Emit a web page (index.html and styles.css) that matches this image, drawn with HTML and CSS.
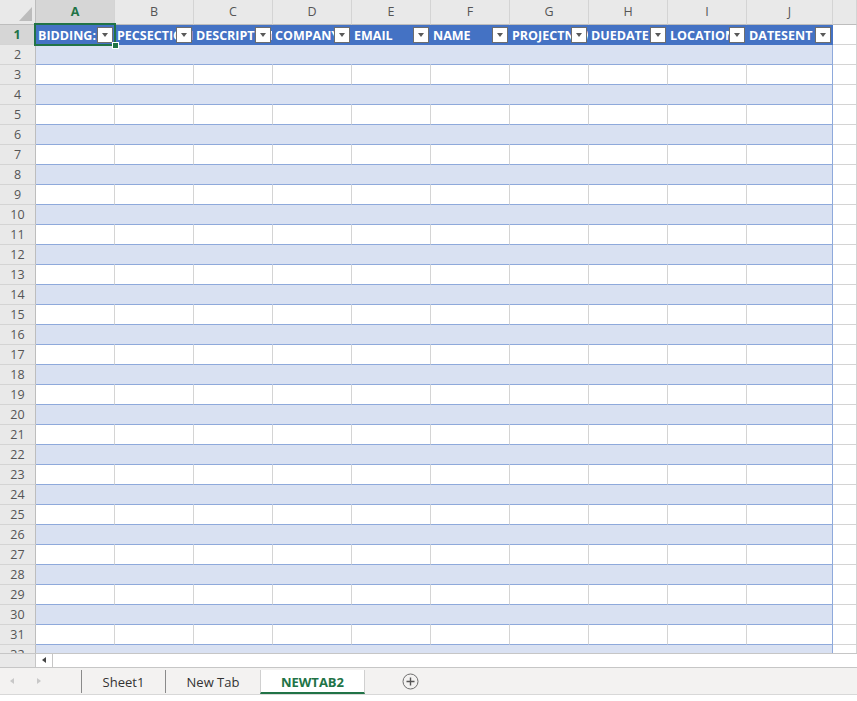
FILE: index.html
```html
<!DOCTYPE html>
<html>
<head>
<meta charset="utf-8">
<link rel="stylesheet" href="styles.css">
</head>
<body>
<div class="app">
  <div class="grid">
    <div class="row colhead">
      <div class="corner"><span class="tri"></span></div>
      <div class="ch sel">A</div><div class="ch">B</div><div class="ch">C</div><div class="ch">D</div><div class="ch">E</div><div class="ch">F</div><div class="ch">G</div><div class="ch">H</div><div class="ch">I</div><div class="ch">J</div><div class="ch k"></div>
    </div>
    <div class="row hdr">
      <div class="rh sel">1</div>
      <div class="c"><span class="t">BIDDING:</span><span class="dd"></span></div>
      <div class="c"><span class="t">PECSECTION</span><span class="dd"></span></div>
      <div class="c"><span class="t">DESCRIPTION</span><span class="dd"></span></div>
      <div class="c"><span class="t">COMPANY</span><span class="dd"></span></div>
      <div class="c"><span class="t">EMAIL</span><span class="dd"></span></div>
      <div class="c"><span class="t">NAME</span><span class="dd"></span></div>
      <div class="c"><span class="t">PROJECTNAME</span><span class="dd"></span></div>
      <div class="c"><span class="t">DUEDATE</span><span class="dd"></span></div>
      <div class="c"><span class="t">LOCATION</span><span class="dd"></span></div>
      <div class="c j"><span class="t">DATESENT</span><span class="dd"></span></div>
      <div class="c k"></div>
    </div>
    <div class="row band"><div class="rh">2</div><div class="c"></div><div class="c"></div><div class="c"></div><div class="c"></div><div class="c"></div><div class="c"></div><div class="c"></div><div class="c"></div><div class="c"></div><div class="c j"></div><div class="c k"></div></div>
    <div class="row"><div class="rh">3</div><div class="c"></div><div class="c"></div><div class="c"></div><div class="c"></div><div class="c"></div><div class="c"></div><div class="c"></div><div class="c"></div><div class="c"></div><div class="c j"></div><div class="c k"></div></div>
    <div class="row band"><div class="rh">4</div><div class="c"></div><div class="c"></div><div class="c"></div><div class="c"></div><div class="c"></div><div class="c"></div><div class="c"></div><div class="c"></div><div class="c"></div><div class="c j"></div><div class="c k"></div></div>
    <div class="row"><div class="rh">5</div><div class="c"></div><div class="c"></div><div class="c"></div><div class="c"></div><div class="c"></div><div class="c"></div><div class="c"></div><div class="c"></div><div class="c"></div><div class="c j"></div><div class="c k"></div></div>
    <div class="row band"><div class="rh">6</div><div class="c"></div><div class="c"></div><div class="c"></div><div class="c"></div><div class="c"></div><div class="c"></div><div class="c"></div><div class="c"></div><div class="c"></div><div class="c j"></div><div class="c k"></div></div>
    <div class="row"><div class="rh">7</div><div class="c"></div><div class="c"></div><div class="c"></div><div class="c"></div><div class="c"></div><div class="c"></div><div class="c"></div><div class="c"></div><div class="c"></div><div class="c j"></div><div class="c k"></div></div>
    <div class="row band"><div class="rh">8</div><div class="c"></div><div class="c"></div><div class="c"></div><div class="c"></div><div class="c"></div><div class="c"></div><div class="c"></div><div class="c"></div><div class="c"></div><div class="c j"></div><div class="c k"></div></div>
    <div class="row"><div class="rh">9</div><div class="c"></div><div class="c"></div><div class="c"></div><div class="c"></div><div class="c"></div><div class="c"></div><div class="c"></div><div class="c"></div><div class="c"></div><div class="c j"></div><div class="c k"></div></div>
    <div class="row band"><div class="rh">10</div><div class="c"></div><div class="c"></div><div class="c"></div><div class="c"></div><div class="c"></div><div class="c"></div><div class="c"></div><div class="c"></div><div class="c"></div><div class="c j"></div><div class="c k"></div></div>
    <div class="row"><div class="rh">11</div><div class="c"></div><div class="c"></div><div class="c"></div><div class="c"></div><div class="c"></div><div class="c"></div><div class="c"></div><div class="c"></div><div class="c"></div><div class="c j"></div><div class="c k"></div></div>
    <div class="row band"><div class="rh">12</div><div class="c"></div><div class="c"></div><div class="c"></div><div class="c"></div><div class="c"></div><div class="c"></div><div class="c"></div><div class="c"></div><div class="c"></div><div class="c j"></div><div class="c k"></div></div>
    <div class="row"><div class="rh">13</div><div class="c"></div><div class="c"></div><div class="c"></div><div class="c"></div><div class="c"></div><div class="c"></div><div class="c"></div><div class="c"></div><div class="c"></div><div class="c j"></div><div class="c k"></div></div>
    <div class="row band"><div class="rh">14</div><div class="c"></div><div class="c"></div><div class="c"></div><div class="c"></div><div class="c"></div><div class="c"></div><div class="c"></div><div class="c"></div><div class="c"></div><div class="c j"></div><div class="c k"></div></div>
    <div class="row"><div class="rh">15</div><div class="c"></div><div class="c"></div><div class="c"></div><div class="c"></div><div class="c"></div><div class="c"></div><div class="c"></div><div class="c"></div><div class="c"></div><div class="c j"></div><div class="c k"></div></div>
    <div class="row band"><div class="rh">16</div><div class="c"></div><div class="c"></div><div class="c"></div><div class="c"></div><div class="c"></div><div class="c"></div><div class="c"></div><div class="c"></div><div class="c"></div><div class="c j"></div><div class="c k"></div></div>
    <div class="row"><div class="rh">17</div><div class="c"></div><div class="c"></div><div class="c"></div><div class="c"></div><div class="c"></div><div class="c"></div><div class="c"></div><div class="c"></div><div class="c"></div><div class="c j"></div><div class="c k"></div></div>
    <div class="row band"><div class="rh">18</div><div class="c"></div><div class="c"></div><div class="c"></div><div class="c"></div><div class="c"></div><div class="c"></div><div class="c"></div><div class="c"></div><div class="c"></div><div class="c j"></div><div class="c k"></div></div>
    <div class="row"><div class="rh">19</div><div class="c"></div><div class="c"></div><div class="c"></div><div class="c"></div><div class="c"></div><div class="c"></div><div class="c"></div><div class="c"></div><div class="c"></div><div class="c j"></div><div class="c k"></div></div>
    <div class="row band"><div class="rh">20</div><div class="c"></div><div class="c"></div><div class="c"></div><div class="c"></div><div class="c"></div><div class="c"></div><div class="c"></div><div class="c"></div><div class="c"></div><div class="c j"></div><div class="c k"></div></div>
    <div class="row"><div class="rh">21</div><div class="c"></div><div class="c"></div><div class="c"></div><div class="c"></div><div class="c"></div><div class="c"></div><div class="c"></div><div class="c"></div><div class="c"></div><div class="c j"></div><div class="c k"></div></div>
    <div class="row band"><div class="rh">22</div><div class="c"></div><div class="c"></div><div class="c"></div><div class="c"></div><div class="c"></div><div class="c"></div><div class="c"></div><div class="c"></div><div class="c"></div><div class="c j"></div><div class="c k"></div></div>
    <div class="row"><div class="rh">23</div><div class="c"></div><div class="c"></div><div class="c"></div><div class="c"></div><div class="c"></div><div class="c"></div><div class="c"></div><div class="c"></div><div class="c"></div><div class="c j"></div><div class="c k"></div></div>
    <div class="row band"><div class="rh">24</div><div class="c"></div><div class="c"></div><div class="c"></div><div class="c"></div><div class="c"></div><div class="c"></div><div class="c"></div><div class="c"></div><div class="c"></div><div class="c j"></div><div class="c k"></div></div>
    <div class="row"><div class="rh">25</div><div class="c"></div><div class="c"></div><div class="c"></div><div class="c"></div><div class="c"></div><div class="c"></div><div class="c"></div><div class="c"></div><div class="c"></div><div class="c j"></div><div class="c k"></div></div>
    <div class="row band"><div class="rh">26</div><div class="c"></div><div class="c"></div><div class="c"></div><div class="c"></div><div class="c"></div><div class="c"></div><div class="c"></div><div class="c"></div><div class="c"></div><div class="c j"></div><div class="c k"></div></div>
    <div class="row"><div class="rh">27</div><div class="c"></div><div class="c"></div><div class="c"></div><div class="c"></div><div class="c"></div><div class="c"></div><div class="c"></div><div class="c"></div><div class="c"></div><div class="c j"></div><div class="c k"></div></div>
    <div class="row band"><div class="rh">28</div><div class="c"></div><div class="c"></div><div class="c"></div><div class="c"></div><div class="c"></div><div class="c"></div><div class="c"></div><div class="c"></div><div class="c"></div><div class="c j"></div><div class="c k"></div></div>
    <div class="row"><div class="rh">29</div><div class="c"></div><div class="c"></div><div class="c"></div><div class="c"></div><div class="c"></div><div class="c"></div><div class="c"></div><div class="c"></div><div class="c"></div><div class="c j"></div><div class="c k"></div></div>
    <div class="row band"><div class="rh">30</div><div class="c"></div><div class="c"></div><div class="c"></div><div class="c"></div><div class="c"></div><div class="c"></div><div class="c"></div><div class="c"></div><div class="c"></div><div class="c j"></div><div class="c k"></div></div>
    <div class="row"><div class="rh">31</div><div class="c"></div><div class="c"></div><div class="c"></div><div class="c"></div><div class="c"></div><div class="c"></div><div class="c"></div><div class="c"></div><div class="c"></div><div class="c j"></div><div class="c k"></div></div>
    <div class="row band"><div class="rh">32</div><div class="c"></div><div class="c"></div><div class="c"></div><div class="c"></div><div class="c"></div><div class="c"></div><div class="c"></div><div class="c"></div><div class="c"></div><div class="c j"></div><div class="c k"></div></div>
    <div class="selbox"><span class="handle"></span></div>
  </div>
  <div class="hscroll">
    <div class="hs-gap"></div>
    <div class="hs-btn"><span class="arr-left"></span></div>
    <div class="hs-track"></div>
  </div>
  <div class="tabs">
    <div class="nav">
      <span class="nav-l"></span>
      <span class="nav-r"></span>
    </div>
    <div class="tab t1">Sheet1</div>
    <div class="tab t2">New Tab</div>
    <div class="tab active">NEWTAB2</div>
    <div class="add">
      <svg width="17" height="17" viewBox="0 0 17 17"><circle cx="8.5" cy="8.5" r="7.5" fill="none" stroke="#6e6e6e" stroke-width="1"/><path d="M8.5 4.5v8M4.5 8.5h8" stroke="#555" stroke-width="1.4"/></svg>
    </div>
  </div>
  <div class="foot"></div>
</div>
</body>
</html>
```

FILE: styles.css
```css
* { box-sizing: border-box; margin: 0; padding: 0; }
html, body { width: 857px; height: 701px; overflow: hidden; background: #fff; }
body { font-family: "Open Sans", "Noto Sans", "Liberation Sans", sans-serif; }

.app { display: flex; flex-direction: column; height: 701px; }

.grid { position: relative; height: 653px; overflow: hidden; flex: none; }

.row {
  display: grid;
  grid-template-columns: 36px repeat(9, 79px) 86px 1fr;
  height: 20px;
}

/* column header */
.colhead { height: 25px; }
.corner {
  position: relative;
  background: #e9e9e9;
  border-right: 1px solid #bdbdbd;
  border-bottom: 1px solid #bdbdbd;
}
.tri {
  position: absolute;
  right: 3px;
  bottom: 3px;
  width: 0; height: 0;
  border-left: 13px solid transparent;
  border-bottom: 14px solid #bcbcbc;
}
.ch {
  background: #e9e9e9;
  border-right: 1px solid #d4d4d4;
  border-bottom: 1px solid #bdbdbd;
  color: #555;
  font-size: 12.5px;
  line-height: 24px;
  text-align: center;
}
.ch.sel {
  background: #d6d6d6;
  color: #217346;
  font-weight: 700;
  border-bottom: 2px solid #217346;
  line-height: 23px;
}

/* row header */
.rh {
  background: #e9e9e9;
  border-right: 1px solid #bdbdbd;
  border-bottom: 1px solid #d4d4d4;
  color: #555;
  font-size: 12.5px;
  line-height: 19px;
  text-align: center;
}
.rh.sel {
  background: #d6d6d6;
  color: #217346;
  font-weight: 700;
  border-right: 2px solid #217346;
}

/* cells */
.c {
  background: #fff;
  border-right: 1px solid #d4d4d4;
  border-bottom: 1px solid #8ea9db;
}
.band .c { background: #d9e1f2; border-right-color: #d9e1f2; }
.c.j { border-right-color: #8ea9db; }
.c.k { background: #fff; border-right-color: #d4d4d4; border-bottom-color: #d4d4d4; }
.band .c.j { border-right-color: #8ea9db; }
.band .c.k { background: #fff; border-right-color: #d4d4d4; }

/* table header row */
.hdr .c {
  position: relative;
  overflow: hidden;
  white-space: nowrap;
  background: #4472c4;
  border-right-color: #4472c4;
  border-bottom-color: #4472c4;
  color: #fff;
  font-weight: 700;
  font-size: 12.5px;
  line-height: 20px;
  padding-left: 2px;
}
.hdr .c.j { border-right-color: #4472c4; }
.hdr .c.k { background: #fff; border-right-color: #d4d4d4; border-bottom-color: #d4d4d4; }
.t { display: block; padding-top: 1px; }
.dd {
  position: absolute;
  right: 1px;
  bottom: 1px;
  width: 16px;
  height: 16px;
  background: #fff;
  border: 1px solid #6e6e6e;
}
.dd::after {
  content: "";
  position: absolute;
  left: 4px;
  top: 5px;
  border-left: 3.5px solid transparent;
  border-right: 3.5px solid transparent;
  border-top: 4px solid #595959;
}

/* active cell selection */
.selbox {
  position: absolute;
  left: 34px;
  top: 23px;
  width: 82px;
  height: 23px;
  border: 2px solid #217346;
}
.handle {
  position: absolute;
  right: -5px;
  bottom: -5px;
  width: 7px;
  height: 7px;
  background: #217346;
  border: 1px solid #fff;
}

/* horizontal scroll strip */
.hscroll {
  display: flex;
  height: 14px;
  flex: none;
  border-top: 1px solid #c6c6c6;
  background: #fff;
}
.hs-gap { width: 36px; background: #e9e9e9; border-right: 1px solid #c6c6c6; }
.hs-btn {
  position: relative;
  width: 17px;
  border-right: 1px solid #c6c6c6;
  background: #fff;
}
.arr-left {
  position: absolute;
  left: 6px;
  top: 3px;
  border-top: 3.5px solid transparent;
  border-bottom: 3.5px solid transparent;
  border-right: 4px solid #444;
}
.hs-track { flex: 1; }

/* sheet tabs */
.tabs {
  display: flex;
  align-items: stretch;
  height: 28px;
  flex: none;
  background: #f3f2f1;
  border-top: 1px solid #c6c6c6;
  border-bottom: 1px solid #d8d8d8;
  font-size: 13px;
  color: #333;
}
.nav {
  position: relative;
  width: 81px;
}
.nav-l, .nav-r {
  position: absolute;
  top: 10px;
  border-top: 3.5px solid transparent;
  border-bottom: 3.5px solid transparent;
}
.nav-l { left: 10px; border-right: 4px solid #c8c8c8; }
.nav-r { left: 37px; border-left: 4px solid #c8c8c8; }
.tab {
  display: flex;
  align-items: center;
  justify-content: center;
  margin: 2px 0 1px;
  border-left: 1px solid #8a8a8a;
}
.t1 { width: 84px; }
.t2 { width: 95px; }
.tab.active {
  width: 105px;
  margin: 2px 0 0;
  background: #fff;
  border-left: 1px solid #d0d0d0;
  border-right: 1px solid #d0d0d0;
  border-bottom: 2px solid #217346;
  color: #217346;
  font-weight: 700;
  padding-top: 1px;
}
.add {
  display: flex;
  align-items: center;
  padding-left: 37px;
}
.add svg { display: block; }

.foot { flex: 1; background: #fff; }
```
